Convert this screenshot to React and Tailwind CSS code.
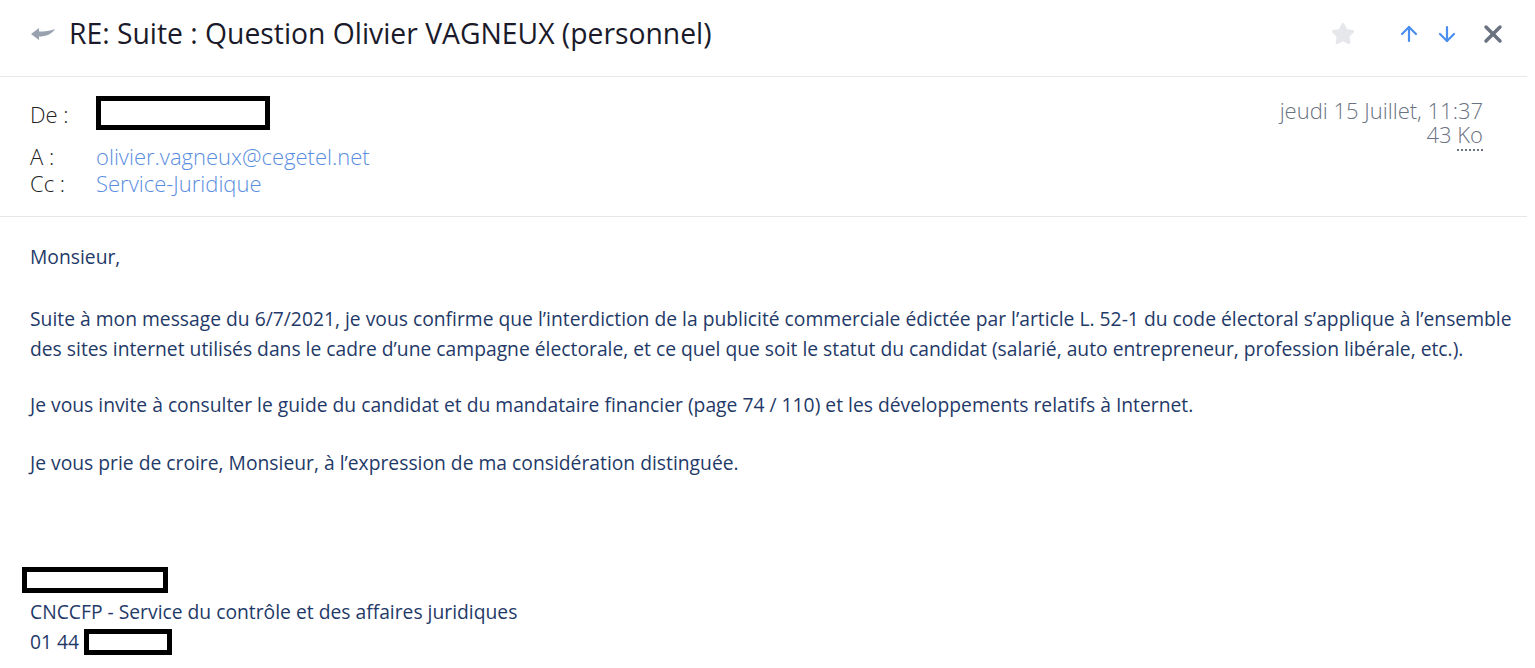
import { ArrowUp, ArrowDown, X, Star } from "lucide-react";

function ReplyIcon() {
  return (
    <svg width="26" height="14" viewBox="0 0 26 14" className="text-gray-400">
      <path d="M1 7 L9 1 L9 4.5 C15 4.5 20 4 25 2 C22 7 16 9.5 9 9.5 L9 13 Z" fill="currentColor" />
    </svg>
  );
}

export default function App() {
  return (
    <div className="min-h-screen bg-white" style={{ fontFamily: "'Open Sans', sans-serif" }}>
      {/* title bar */}
      <div className="mr-[8px] flex h-[77px] items-center border-b border-gray-200 pb-[9px] pl-[30px] pr-[20px]">
        <ReplyIcon />
        <h1 className="ml-[13px] text-[28.3px] text-[#1a1a2a]">
          RE: Suite : Question Olivier VAGNEUX (personnel)
        </h1>
        <div className="ml-auto flex items-center">
          <Star className="h-6 w-6 fill-gray-200 text-gray-200" />
          <ArrowUp className="ml-[42px] h-6 w-6 text-[#4a8ef0]" strokeWidth={2.2} />
          <ArrowDown className="ml-[14px] h-6 w-6 text-[#4a8ef0]" strokeWidth={2.2} />
          <X className="ml-[20px] h-7 w-7 text-gray-500" strokeWidth={3} />
        </div>
      </div>

      {/* header */}
      <div className="mr-[8px] flex border-b border-gray-200 pb-[19px] pl-[30px] pr-[44px] pt-[19px] text-[22px] font-light">
        <div className="grid grid-cols-[66px_1fr] grid-rows-[36px_38px_27px] items-center leading-[27px]">
          <span className="text-[#222]">De :</span>
          <div className="h-[34px] w-[174px] -translate-y-[1px] border-[5px] border-black" />
          <span className="self-end text-[#222]">A :</span>
          <span className="self-end text-[#5a8ee0]">olivier.vagneux@cegetel.net</span>
          <span className="text-[#222]">Cc :</span>
          <span className="text-[#5a8ee0]">Service-Juridique</span>
        </div>
        <div className="ml-auto mt-[2px] text-right leading-[24px] text-gray-500">
          <p>jeudi 15 Juillet, 11:37</p>
          <p>
            43 <span className="border-b-2 border-dotted border-gray-500">Ko</span>
          </p>
        </div>
      </div>

      {/* body */}
      <div className="whitespace-nowrap pl-[30px] pr-[18px] pt-[25px] text-[19.3px] leading-[30px] text-[#1f3a68]">
        <p>Monsieur,</p>
        <p className="mt-[32px]">
          Suite à mon message du 6/7/2021, je vous confirme que l’interdiction  de la publicité commerciale édictée par l’article L. 52-1 du code électoral s’applique à l’ensemble
          <br />
          des sites internet utilisés dans le cadre d’une campagne électorale, et ce quel que soit le statut du candidat (salarié, auto entrepreneur, profession libérale, etc.).
        </p>
        <p className="mt-[26px]">
          Je vous invite à consulter le guide du candidat et du mandataire financier (page 74 / 110) et les développements relatifs à Internet.
        </p>
        <p className="mt-[28px]">Je vous prie de croire, Monsieur, à l’expression de ma considération distinguée.</p>
        <div className="ml-[-8px] mt-[89px] h-[26px] w-[146px] border-[5px] border-black" />
        <p className="mt-[4px]">CNCCFP - Service du contrôle et des affaires juridiques</p>
        <p className="flex items-center">
          01 44
          <span className="ml-[5px] inline-block h-[26px] w-[88px] border-[5px] border-black" />
        </p>
      </div>
    </div>
  );
}
